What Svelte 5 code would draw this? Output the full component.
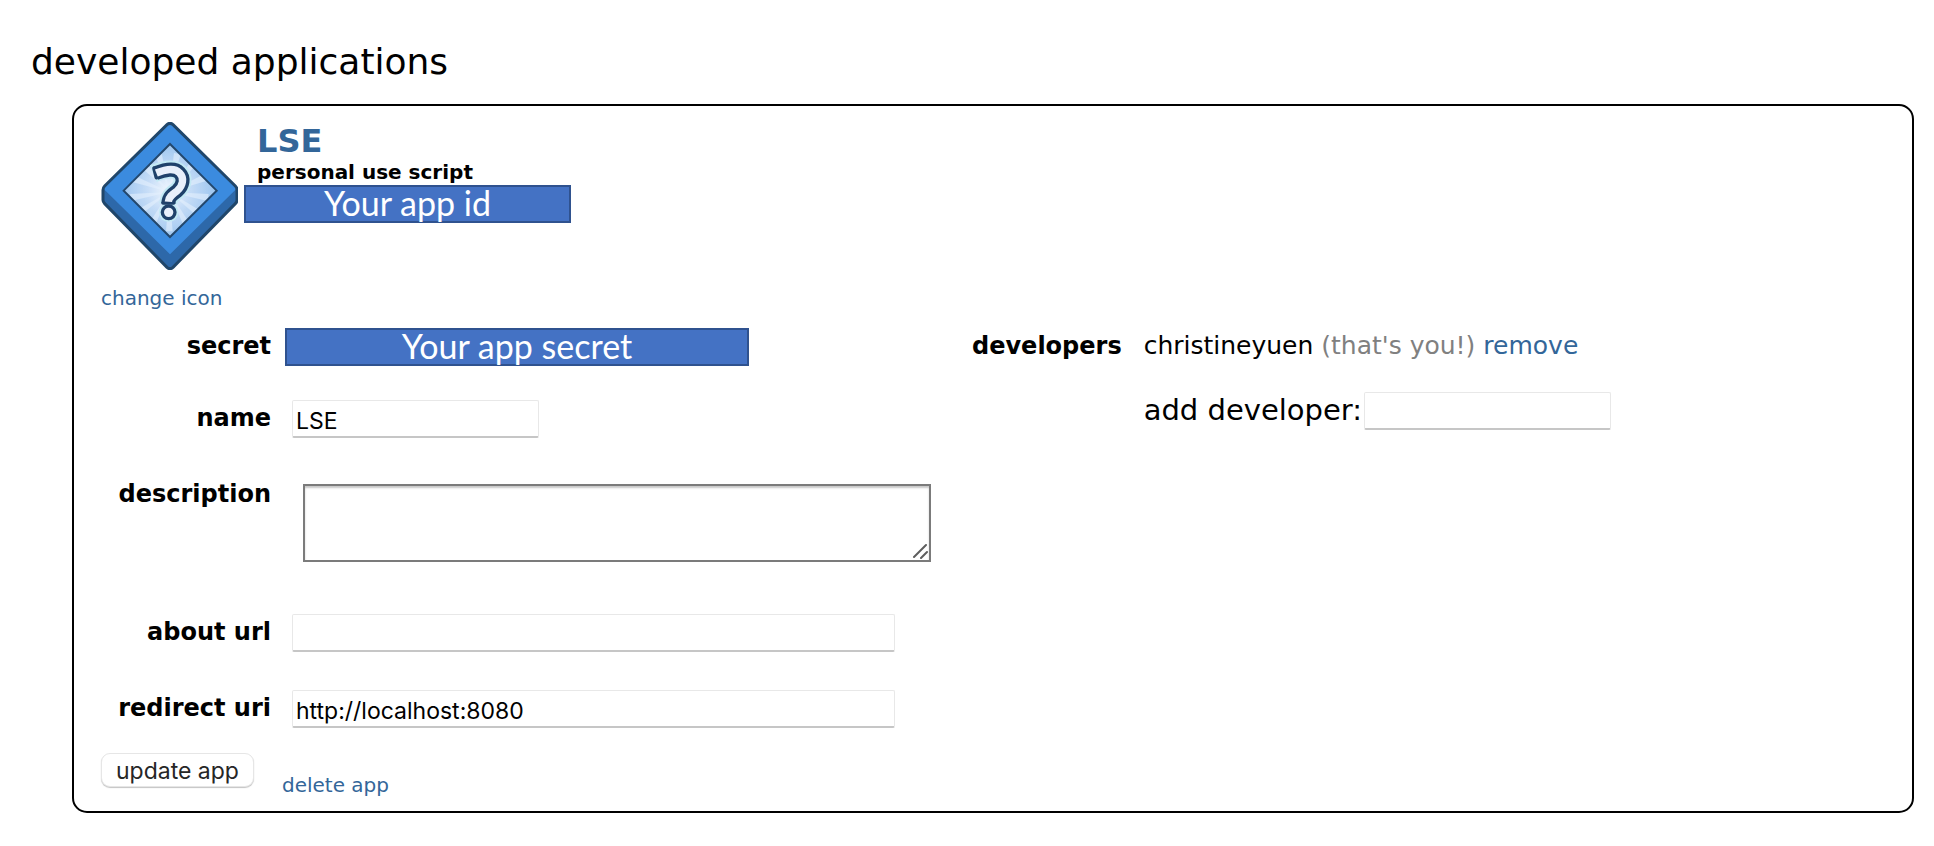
<script>
  let name = $state('LSE');
  let description = $state('');
  let aboutUrl = $state('');
  let redirectUri = $state('http://localhost:8080');
  let newDeveloper = $state('');

  // Light burst behind the question mark: direction of each ray in degrees
  const rays = [8, 36, 62, 90, 118, 146, 172, 200, 226, 254, 282, 310, 338];
  const point = (deg, r) => {
    const a = (deg * Math.PI) / 180;
    return `${Math.round(238 + r * Math.cos(a))},${Math.round(246 + r * Math.sin(a))}`;
  };
</script>

<main>
  <h1>developed applications</h1>

  <section class="card">
    <header>
      <svg class="app-icon" viewBox="33 36 411 444" aria-hidden="true">
        <defs>
          <radialGradient id="glow" cx="0.48" cy="0.5" r="0.52">
            <stop offset="0" stop-color="#f1f7fe" />
            <stop offset="0.45" stop-color="#c5dcf7" />
            <stop offset="1" stop-color="#9cc5ef" />
          </radialGradient>
          <clipPath id="pane"><path d="M240 102 380 242 240 381 101 242Z" /></clipPath>
        </defs>
        <path
          d="M231 44q9-8 18 0L436 228q5 5 5 12v30q0 6-5 11L249 472q-9 8-18 0L44 281q-5-5-5-11v-30q0-7 5-12Z"
          fill="#3b8bdf"
        />
        <path d="M42 238 240 433 438 238v32q0 6-4 10L248 470q-8 7-16 0L46 280q-4-4-4-10Z" fill="#2d68a9" />
        <path
          d="M231 44q9-8 18 0L436 228q5 5 5 12v30q0 6-5 11L249 472q-9 8-18 0L44 281q-5-5-5-11v-30q0-7 5-12Z"
          fill="none"
          stroke="#20466a"
          stroke-width="9"
        />
        <path d="M240 102 380 242 240 381 101 242Z" fill="url(#glow)" />
        <g clip-path="url(#pane)" fill="#e4f0fd" opacity="0.6">
          {#each rays as deg}
            <polygon points="238,246 {point(deg - 5, 118)} {point(deg + 5, 118)}" />
          {/each}
        </g>
        <path d="M240 102 380 242 240 381 101 242Z" fill="none" stroke="#23476c" stroke-width="6" />
        <g fill="none" stroke-linejoin="round">
          <path d="M190 191C226 176 255 174 268 188C284 204 279 226 262 242C245 254 236 262 235 282" stroke="#c3e9f4" stroke-width="54" />
          <circle cx="236" cy="307" r="29" fill="#c3e9f4" />
          <path d="M196 190C226 178 255 174 268 188C284 204 279 226 262 242C245 254 236 262 235 280" stroke="#1f416a" stroke-width="42" />
          <path d="M192 175 199 203M219 279H251" stroke="#1f416a" stroke-width="11" stroke-linecap="round" />
          <path d="M199 189C226 178 255 174 268 188C284 204 279 226 262 242C245 254 236 262 235 275" stroke="#e8effa" stroke-width="22" />
          <circle cx="236" cy="307" r="19" fill="#e8effa" stroke="#1f416a" stroke-width="10" />
        </g>
      </svg>
      <div class="app-head">
        <h2><a href="#app">LSE</a></h2>
        <p class="kind">personal use script</p>
        <div class="mask id">Your app id</div>
      </div>
    </header>

    <a class="small-link change" href="#icon">change icon</a>

    <form onsubmit={(e) => e.preventDefault()}>
      <div class="columns">
        <div class="fields">
          <div class="row secret">
            <span class="label">secret</span>
            <div class="mask key">Your app secret</div>
          </div>
          <div class="row">
            <label class="label" for="name">name</label>
            <input id="name" class="short inset" type="text" bind:value={name} />
          </div>
          <div class="row description">
            <label class="label" for="description">description</label>
            <div class="area">
              <textarea id="description" bind:value={description}></textarea>
              <svg class="grip" viewBox="0 0 16 16" aria-hidden="true">
                <path d="M2 14 14 2M9 15l6-6" />
              </svg>
            </div>
          </div>
          <div class="row">
            <label class="label" for="about">about url</label>
            <input id="about" class="long inset" type="text" bind:value={aboutUrl} />
          </div>
          <div class="row last">
            <label class="label" for="redirect">redirect uri</label>
            <input id="redirect" class="long inset" type="text" bind:value={redirectUri} />
          </div>
        </div>

        <div class="developers">
          <span class="label">developers</span>
          <div>
            <p class="dev">christineyuen <span class="you">(that's you!)</span> <a href="#remove">remove</a></p>
            <div class="add">
              <label for="developer">add developer:</label>
              <input id="developer" class="short" type="text" bind:value={newDeveloper} />
            </div>
          </div>
        </div>
      </div>

      <div class="actions">
        <button type="submit">update app</button>
        <a class="small-link" href="#delete">delete app</a>
      </div>
    </form>
  </section>
</main>

<style>
  :global(body) {
    margin: 0;
    background: #fff;
  }
  main {
    padding: 40px 20px 34px 31px;
    color: #000;
    font: 24px/24px 'DejaVu Sans', Verdana, sans-serif;
  }
  h1,
  h2,
  p {
    margin: 0;
  }
  h1 {
    font-size: 36px;
    line-height: 44px;
    font-weight: 400;
  }
  a {
    color: #336699;
    text-decoration: none;
  }
  .card {
    margin: 20px 0 0 41px;
    padding: 16px 27px 14px;
    border: 2px solid #000;
    border-radius: 15px;
  }
  header {
    display: flex;
    gap: 6px;
  }
  .app-icon {
    display: block;
    flex: none;
    width: 137px;
    height: 148px;
  }
  .app-head {
    padding-top: 1px;
  }
  h2 {
    padding-left: 13px;
    font-size: 32px;
    line-height: 36px;
    font-weight: 700;
  }
  .kind {
    padding: 1px 0 1px 13px;
    font-size: 20px;
    line-height: 24px;
    font-weight: 700;
  }
  .mask {
    box-sizing: border-box;
    height: 38px;
    border: 2px solid #2f528f;
    background: #4472c4;
    color: #fff;
    font: 34px/32px Lato, 'Open Sans', sans-serif;
    text-align: center;
  }
  .id {
    width: 327px;
  }
  .key {
    width: 464px;
  }
  .small-link {
    font-size: 20px;
    line-height: 24px;
  }
  .change {
    display: block;
    width: max-content;
    margin: 16px 0 18px;
  }
  .columns {
    display: grid;
    grid-template-columns: max-content 1fr;
    column-gap: 41px;
  }
  .row {
    display: grid;
    grid-template-columns: 170px max-content;
    column-gap: 14px;
    align-items: start;
    padding-bottom: 38px;
  }
  .row.secret {
    padding-bottom: 34px;
  }
  .row.description {
    padding-bottom: 52px;
  }
  .row.last {
    padding-bottom: 25px;
  }
  .label {
    padding-top: 6px;
    font-weight: 700;
    text-align: right;
  }
  input {
    box-sizing: border-box;
    height: 38px;
    margin: 0;
    padding: 4px 3px 0;
    border: 1px solid #e8e8e8;
    border-bottom: 2px solid #c6c6c6;
    border-radius: 2px;
    background: #fff;
    color: #000;
    font: 23px/28px Inter, sans-serif;
  }
  .short {
    width: 247px;
  }
  .long {
    width: 603px;
  }
  .inset {
    margin-left: 7px;
  }
  .area {
    position: relative;
    margin: 8px 0 0 18px;
  }
  textarea {
    display: block;
    box-sizing: border-box;
    width: 628px;
    height: 78px;
    margin: 0;
    padding: 4px;
    border: 2px solid #7b7b7b;
    border-radius: 0;
    box-shadow: inset 0 2px 2px #c8c8c8;
    background: #fff;
    font: 23px/28px Inter, sans-serif;
    resize: none;
  }
  .grip {
    position: absolute;
    right: 3px;
    bottom: 3px;
    width: 16px;
    height: 16px;
    fill: none;
    stroke: #5e5e5e;
    stroke-width: 2;
    stroke-linecap: round;
  }
  .developers {
    display: flex;
    align-items: flex-start;
    gap: 22px;
  }
  .dev {
    padding-top: 6px;
    font-size: 25px;
  }
  .you {
    color: #808080;
  }
  .add {
    display: flex;
    align-items: flex-start;
    gap: 2px;
    margin-top: 34px;
  }
  .add label {
    padding-top: 2px;
    font-size: 29px;
    line-height: 32px;
  }
  .actions {
    display: flex;
    align-items: flex-start;
    gap: 28px;
  }
  .actions a {
    padding-top: 20px;
  }
  button {
    box-sizing: border-box;
    height: 34px;
    margin: 0;
    padding: 2px 14px 0;
    border: 1px solid #e6e6e6;
    border-radius: 9px;
    box-shadow: 0 1px 1px #c4c4c4;
    background: #fff;
    color: #262626;
    font: 23px/28px Inter, sans-serif;
  }
</style>
